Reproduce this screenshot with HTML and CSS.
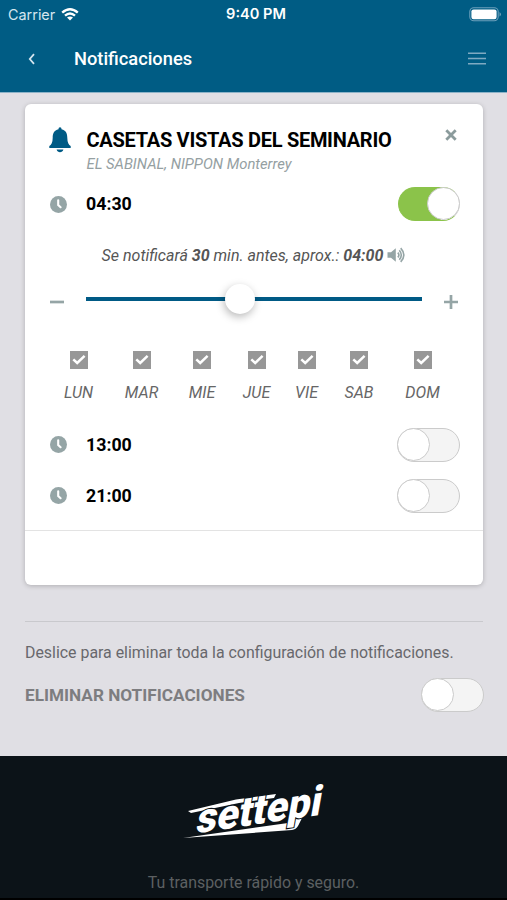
FILE: index.html
```html
<!DOCTYPE html>
<html lang="es">
<head>
<meta charset="utf-8">
<title>Notificaciones</title>
<link rel="stylesheet" href="styles.css">
</head>
<body>
<svg class="defs" aria-hidden="true">
  <symbol id="clock" viewBox="0 0 17 17"><circle cx="8.5" cy="8.5" r="8.5" fill="#95a5a6"/><path d="M8.2 4.2V9L10.6 11.2" fill="none" stroke="#fff" stroke-width="2.1" stroke-linecap="round"/></symbol>
  <symbol id="check" viewBox="0 0 18 18"><path d="M0 0H18V18H0z" fill="#979797"/><path d="M3.3 8.3L7.2 12L14.6 4.9" fill="none" stroke="#fff" stroke-width="2.5"/></symbol>
</svg>
<header class="top">
  <div class="status">
    <div class="carrier"><span>Carrier</span>
      <svg width="18" height="13" viewBox="0 0 18 13" fill="none" stroke="#fff"><path d="M1.2 4.7Q9 -2.1 16.8 4.7M4 7.7Q9 3.3 14 7.7" stroke-width="2.4"/><path d="M6 9.6Q9 7.2 12 9.6L9 12.5z" fill="#fff" stroke="none"/></svg>
    </div>
    <div class="time">9:40 PM</div>
    <svg class="battery" width="33" height="15" viewBox="0 0 33 15"><rect x=".8" y=".8" width="28.4" height="13" rx="4" fill="none" stroke="#6b9fbb" stroke-width="1.1"/><rect x="2.4" y="2.4" width="25.2" height="9.8" rx="2.2" fill="#fff"/><path d="M30.6 5Q33 7.3 30.6 9.6z" fill="#8db5c9"/></svg>
  </div>
  <div class="nav">
    <svg class="back" width="8" height="12" viewBox="0 0 8 12"><path d="M6 1.2L1.8 6L6 10.8" fill="none" stroke="#d3e4ee" stroke-width="1.8"/></svg>
    <h1>Notificaciones</h1>
    <svg class="menu" width="18" height="13" viewBox="0 0 18 13"><path d="M0 1.3H18M0 6.5H18M0 11.7H18" stroke="#7faac2" stroke-width="1.6"/></svg>
  </div>
</header>
<main>
  <section class="card">
    <div class="stop">
      <svg class="bell" width="22" height="26" viewBox="0 0 22 26"><path d="M11 .3C12 .3 12.5 1.2 12.5 2.2C17 3.2 18.3 6.5 18.3 10.8C18.3 15.5 19.7 18 21.7 19V21H.3V19C2.3 18 3.7 15.5 3.7 10.8C3.7 6.5 5 3.2 9.5 2.2C9.5 1.2 10 .3 11 .3zM7.6 22.5H14.4C14 24.4 12.5 25.2 11 25.2S8 24.4 7.6 22.5z" fill="#005b85"/></svg>
      <div class="names"><h2>CASETAS VISTAS DEL SEMINARIO</h2><p>EL SABINAL, NIPPON Monterrey</p></div>
      <svg class="close" width="12" height="12" viewBox="0 0 12 12"><path d="M1.3 1.3L10.7 10.7M10.7 1.3L1.3 10.7" stroke="#8b9b9c" stroke-width="2.8"/></svg>
    </div>
    <div class="row first"><svg class="clock"><use href="#clock"/></svg><b>04:30</b><span class="switch on"><i></i></span></div>
    <div class="notice"><span class="words">Se notificará <b>30</b> min. antes, aprox.: <b>04:00</b></span>
      <svg width="19" height="16" viewBox="0 0 19 16"><path d="M.5 5.2H4L8.800 1.2V14.8L4 10.8H.5z" fill="#95a5a6"/><path d="M10.8 5.6Q13 8 10.8 10.4M12.3 3.2Q16.300 8 12.3 12.8M13.7 1.1Q20 8 13.7 14.9" fill="none" stroke="#95a5a6" stroke-width="1.6"/></svg>
    </div>
    <div class="slider">
      <svg class="sign" width="14" height="16" viewBox="0 0 14 16"><path d="M0 8H14" stroke="#95a5a6" stroke-width="2.7"/></svg>
      <div class="track"><i class="knob"></i></div>
      <svg class="sign" width="14" height="16" viewBox="0 0 14 16"><path d="M0 8H14M7 1V15" stroke="#95a5a6" stroke-width="2.7"/></svg>
    </div>
    <div class="days">
      <div><svg><use href="#check"/></svg><span>LUN</span></div>
      <div><svg><use href="#check"/></svg><span>MAR</span></div>
      <div><svg><use href="#check"/></svg><span>MIE</span></div>
      <div><svg><use href="#check"/></svg><span>JUE</span></div>
      <div><svg><use href="#check"/></svg><span>VIE</span></div>
      <div><svg><use href="#check"/></svg><span>SAB</span></div>
      <div><svg><use href="#check"/></svg><span>DOM</span></div>
    </div>
    <div class="row"><svg class="clock"><use href="#clock"/></svg><b>13:00</b><span class="switch"><i></i></span></div>
    <div class="row"><svg class="clock"><use href="#clock"/></svg><b>21:00</b><span class="switch"><i></i></span></div>
    <div class="card-foot"></div>
  </section>
  <section class="remove">
    <p>Deslice para eliminar toda la configuración de notificaciones.</p>
    <div class="remove-row"><b>ELIMINAR NOTIFICACIONES</b><span class="switch"><i></i></span></div>
  </section>
</main>
<footer>
  <svg class="logo" width="144" height="58" viewBox="0 0 144 58" fill="#fff">
    <path d="M5 30L53 18.500L93 13L91 17L56 22L8 32z"/>
    <path d="M0 57L105 42L110 33H121L115 45Q113 48.500 109 49z"/>
    <text class="logo-text" transform="matrix(1 -.15 -.2 1.120 12 52.500)" textLength="125" lengthAdjust="spacingAndGlyphs">settepi</text>
  </svg>
  <p>Tu transporte rápido y seguro.</p>
</footer>
</body>
</html>
```
FILE: styles.css
```css
* { box-sizing: border-box; }
body { margin: 0; width: 507px; height: 900px; overflow: hidden; background: #e0dfe4; font-family: Roboto, sans-serif; display: flex; flex-direction: column; }
h1, h2, p { margin: 0; }
svg { display: block; flex: none; }
.defs { position: absolute; width: 0; height: 0; }
.top { height: 93px; background: #005c84; color: #fff; flex: none; border-bottom: 1px solid #8db3c8; }
.status { display: grid; grid-template-columns: 1fr auto 1fr; align-items: center; height: 27px; padding: 0 5px 0 8px; }
.carrier { display: flex; align-items: center; gap: 7px; font: 14.4px/27px Inter, sans-serif; color: #d5e6ef; }
.carrier svg { margin-left: -1px; }
.time { font: 600 14.6px/27px Inter, sans-serif; margin: 1px 0 0 2px; }
.battery { justify-self: end; }
.nav { display: flex; align-items: center; height: 63px; padding: 0 21px 0 28px; }
.nav h1 { font-size: 18.3px; font-weight: 500; margin-left: 38px; flex: 1; }
main { padding: 11px 24px 0 25px; height: 663px; flex: none; }
.card { height: 481px; background: #fff; border-radius: 6px; box-shadow: 0 1px 5px rgba(0,0,0,.22); }
.stop { display: flex; height: 74px; padding: 23px 26px 0 24px; }
.names { margin-left: 15.5px; flex: 1; }
h2 { font-size: 20px; line-height: 27px; font-weight: 700; letter-spacing: -.28px; color: #000; white-space: nowrap; }
.names p { font-size: 14.8px; line-height: 20px; font-style: italic; color: #95a0a2; white-space: nowrap; }
.close { margin-top: 2px; }
.row { display: flex; align-items: center; height: 51px; padding: 0 23px 0 25px; }
.row b { margin: -1px 0 0 19px; flex: 1; font-size: 17.8px; color: #000; }
.clock { width: 17px; height: 17px; }
.switch { display: block; width: 63px; height: 34px; border: 1.5px solid #cbcbcb; border-radius: 17px; background: #f4f4f4; flex: none; }
.switch i { display: block; width: 33px; height: 33px; margin: -1px; border: 1.5px solid #cbcbcb; border-radius: 50%; background: #fff; }
.switch.on { width: 62px; background: linear-gradient(90deg, #8bc34a 70%, #fff 70%); border-color: #8bc34a #d0d0d0 #8bc34a #8bc34a; }
.switch.on i { margin-left: auto; }
.first { height: 52px; }
.notice { display: flex; justify-content: center; align-items: center; gap: 4px; height: 50px; font-size: 16px; font-style: italic; color: #555; white-space: nowrap; }
.slider { display: flex; align-items: center; height: 38px; padding: 0 25px; }
.slider .sign { margin-top: 5px; }
.track { margin: 0 22px; flex: 1; height: 4px; background: #005a85; display: flex; align-items: center; padding-left: 139px; }
.knob { width: 30px; height: 30px; border-radius: 50%; background: #fff; box-shadow: -1px 3px 8px rgba(0,0,0,.28); }
.days { display: grid; grid-template-columns: 62px 64px 57px 52px 48px 57px 70px; margin-left: 22.5px; height: 101px; padding-top: 33px; font-size: 16px; font-style: italic; color: #666; }
.days div { display: flex; flex-direction: column; align-items: center; gap: 14px; }
.days svg { width: 18px; height: 18px; }
.card-foot { margin-top: 9px; border-top: 1px solid #e3e3e3; }
.remove { margin-top: 36px; border-top: 1px solid #c9c9cd; }
.remove p { margin-top: 20px; font-size: 15.9px; line-height: 22px; color: #68686c; white-space: nowrap; }
.remove-row { display: flex; align-items: center; justify-content: space-between; height: 62px; font-size: 17.2px; color: #7d7d80; margin-right: -1px; }
footer { flex: 1; background: #0c1318; border-bottom: 2px solid #000; display: flex; flex-direction: column; align-items: center; }
.logo { margin: 25px 0 0 3px; overflow: visible; }
.logo-text { font: 900 38px Roboto, sans-serif; stroke: #0c1318; stroke-width: 2px; paint-order: stroke; }
footer p { font-size: 15.9px; line-height: 22px; margin-top: 33px; color: #5c6062; }
```
